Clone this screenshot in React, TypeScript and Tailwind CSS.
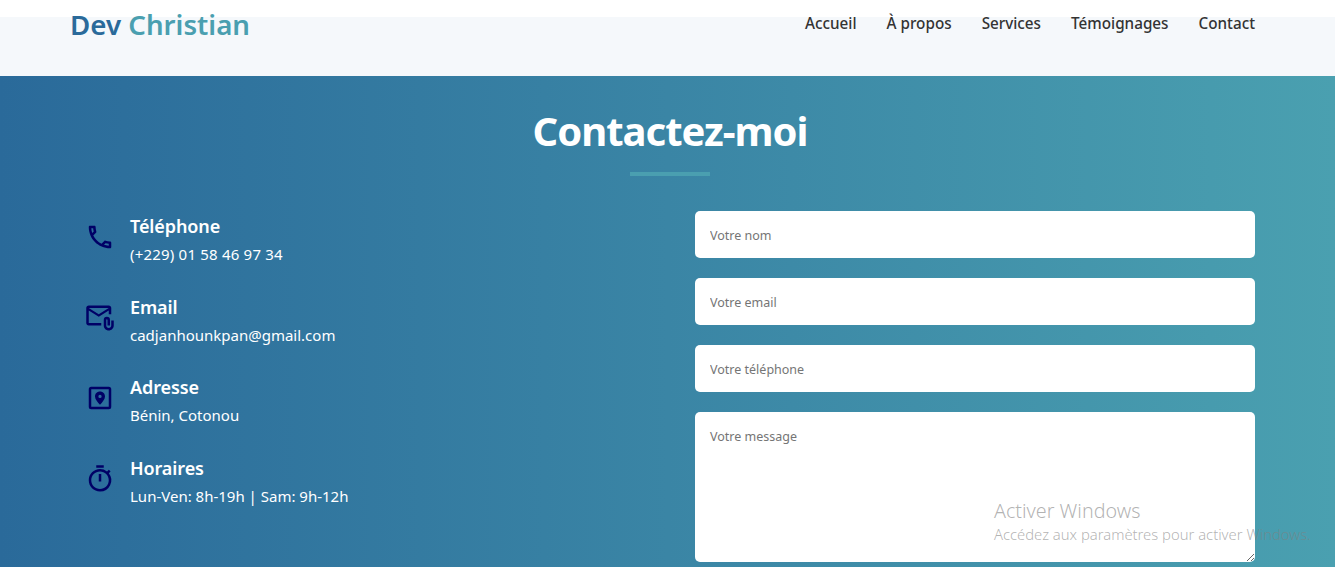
import { MdOutlineAttachEmail, MdOutlineCall, MdOutlineTimer } from "react-icons/md";

const font = { fontFamily: '"Noto Sans", "Open Sans", sans-serif' };

function PinBoxIcon({ className }: { className?: string }) {
  return (
    <svg viewBox="0 0 24 24" className={className} aria-hidden="true">
      <rect x="4" y="4" width="16" height="16" rx="1" fill="none" stroke="currentColor" strokeWidth="2" />
      <path
        fill="currentColor"
        fillRule="evenodd"
        d="M12 6.8c-2.3 0-4 1.7-4 3.9 0 2.4 2.3 4.7 4 6.6 1.7-1.9 4-4.2 4-6.6 0-2.2-1.7-3.9-4-3.9Zm0 2.6a1.3 1.3 0 1 1 0 2.6 1.3 1.3 0 0 1 0-2.6Z"
      />
    </svg>
  );
}

const navLinks = ["Accueil", "À propos", "Services", "Témoignages", "Contact"];

const contactItems = [
  { icon: MdOutlineCall, title: "Téléphone", value: "(+229) 01 58 46 97 34", height: "h-[81px]", spacing: "tracking-[0.2px]" },
  { icon: MdOutlineAttachEmail, title: "Email", value: "cadjanhounkpan@gmail.com", height: "h-[80px]", spacing: "tracking-normal" },
  { icon: PinBoxIcon, title: "Adresse", value: "Bénin, Cotonou", height: "h-[81px]", spacing: "tracking-normal" },
  { icon: MdOutlineTimer, title: "Horaires", value: "Lun-Ven: 8h-19h | Sam: 9h-12h", height: "h-[80px]", spacing: "tracking-normal" },
];

const fieldClass =
  "block w-full rounded-[5px] bg-white px-[15px] text-[12.5px] text-[#333] outline-none placeholder:text-[#757575]";

export default function App() {
  return (
    <div className="relative h-[567px] overflow-hidden" style={font}>
      <header className="flex h-[76px] items-start justify-between bg-[linear-gradient(to_bottom,#ffffff_17px,#f5f8fb_17px)] pl-[70px] pr-[80px]">
        <a className="mt-[4px] text-[27.7px] leading-[40px] font-semibold text-[#2a6a9a]">
          Dev <span className="text-[#4a9fb0]">Christian</span>
        </a>
        <nav className="mt-[11px] flex gap-[30px] text-[15.25px] leading-[24px] font-medium text-[#333]">
          {navLinks.map((link) => (
            <a key={link}>{link}</a>
          ))}
        </nav>
      </header>

      <section className="h-[491px] bg-[linear-gradient(to_right,#2a6a9a,#4aa0b0)] pl-[85px] pr-[80px] text-white">
        <h2 className="pt-[28px] text-center text-[40px] leading-[54px] font-bold tracking-[-1px]">Contactez-moi</h2>
        <div className="mx-auto mt-[14px] h-[4px] w-[80px] bg-[#4a9fb0]" />

        <div className="mt-[35px] grid grid-cols-[1fr_560px]">
          <ul className="pt-[1px]">
            {contactItems.map(({ icon: Icon, title, value, height, spacing }) => (
              <li key={title} className={`flex ${height}`}>
                <Icon className="mt-[10px] h-[30px] w-[30px] text-[#000066]" />
                <div className="ml-[15px]">
                  <h3 className="text-[18px] leading-[28px] font-semibold tracking-[-0.1px]">{title}</h3>
                  <p className={`text-[15px] leading-[28px] ${spacing}`}>{value}</p>
                </div>
              </li>
            ))}
          </ul>

          <form className="flex flex-col gap-[20px]">
            <input className={`${fieldClass} h-[47px] pt-[2px]`} placeholder="Votre nom" />
            <input className={`${fieldClass} h-[47px] pt-[2px]`} placeholder="Votre email" />
            <input className={`${fieldClass} h-[47px] pt-[2px]`} placeholder="Votre téléphone" />
            <textarea className={`${fieldClass} h-[150px] py-[15px] leading-[20px]`} placeholder="Votre message" />
          </form>
        </div>
      </section>

      {/* Windows activation watermark sits over the page */}
      <div className="pointer-events-none absolute top-[498px] left-[994px] whitespace-nowrap font-light text-[#80808099]">
        <p className="text-[19.7px] leading-[26px]">Activer Windows</p>
        <p className="text-[14.8px] leading-[20px]">Accédez aux paramètres pour activer Windows.</p>
      </div>
    </div>
  );
}
